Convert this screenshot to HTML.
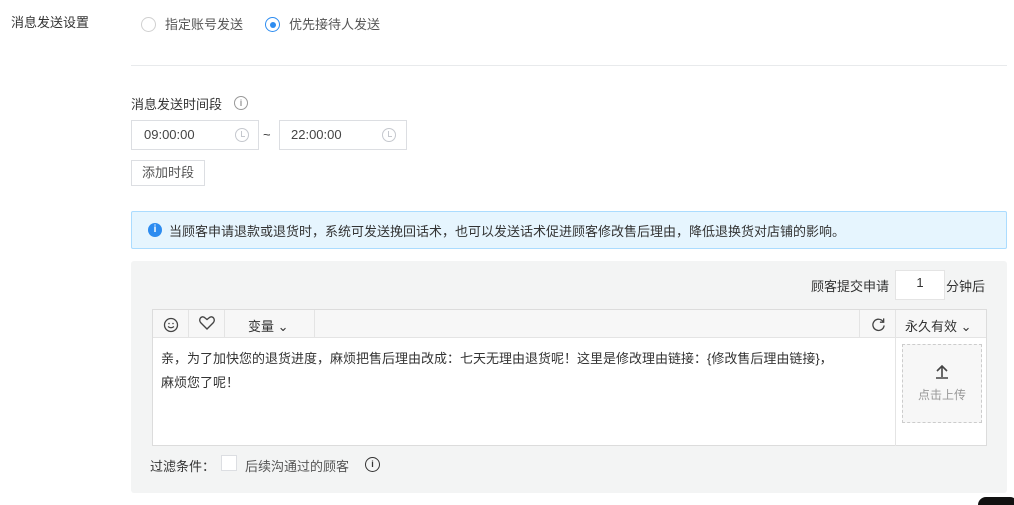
<!DOCTYPE html>
<html><head><meta charset="utf-8"><style>
*{box-sizing:border-box;margin:0;padding:0}
body{width:1014px;height:501px;background:#fff;position:relative;overflow:hidden;font-family:"Liberation Sans","Noto Sans CJK SC",sans-serif;font-size:13px;color:#333}
.a{position:absolute}
.radio{width:15px;height:15px;border:1px solid #d0d0d0;border-radius:50%;background:#fff}
.radio.on{border-color:#2d8cf0}
.radio.on:after{content:"";position:absolute;left:3.5px;top:3.5px;width:6px;height:6px;border-radius:50%;background:#2d8cf0}
.inp{border:1px solid #dcdee2;background:#fff;height:30px}
.clock{width:14px;height:14px;border:1px solid #c5c8ce;border-radius:50%}
.clock:after{content:"";position:absolute;left:5px;top:2px;width:3px;height:5px;border-left:1px solid #c5c8ce;border-bottom:1px solid #c5c8ce}
.vl{position:absolute;top:0;width:1px;height:28px;background:#e4e4e4}
</style></head><body>
<div class="a" style="left:11px;top:12px;color:#333">消息发送设置</div>
<div class="a radio" style="left:141px;top:17px"></div>
<div class="a" style="left:165px;top:14px;color:#555">指定账号发送</div>
<div class="a radio on" style="left:265px;top:17px"></div>
<div class="a" style="left:289px;top:14px;color:#555">优先接待人发送</div>
<div class="a" style="left:131px;top:65px;width:876px;height:1px;background:#e8eaec"></div>
<div class="a" style="left:131px;top:94px">消息发送时间段</div>
<div class="a" style="left:234px;top:96px;width:14px;height:14px;border:1px solid #999;border-radius:50%;font-size:9px;line-height:12px;text-align:center;color:#999;font-weight:bold">i</div>
<div class="a inp" style="left:131px;top:120px;width:128px"><span class="a" style="left:12px;top:6px;color:#444">09:00:00</span><div class="a clock" style="left:103px;top:7px"></div></div>
<div class="a" style="left:263px;top:127px">~</div>
<div class="a inp" style="left:279px;top:120px;width:128px"><span class="a" style="left:11px;top:6px;color:#444">22:00:00</span><div class="a clock" style="left:102px;top:7px"></div></div>
<div class="a" style="left:131px;top:160px;width:74px;height:26px;border:1px solid #dcdee2;line-height:24px;text-align:center;color:#555">添加时段</div>
<div class="a" style="left:131px;top:211px;width:876px;height:38px;background:#e6f5fe;border:1px solid #abdcff;border-radius:2px"></div>
<div class="a" style="left:148px;top:223px;width:14px;height:14px;border-radius:50%;background:#2d8cf0;color:#fff;font-size:10px;line-height:14px;text-align:center;font-weight:bold">i</div>
<div class="a" style="left:169px;top:221px;color:#333">当顾客申请退款或退货时，系统可发送挽回话术，也可以发送话术促进顾客修改售后理由，降低退换货对店铺的影响。</div>
<div class="a" style="left:131px;top:261px;width:876px;height:232px;background:#f3f4f4;border-radius:3px"></div>
<div class="a" style="left:811px;top:276px">顾客提交申请</div>
<div class="a" style="left:895px;top:270px;width:50px;height:30px;background:#fff;border:1px solid #e4e4e4;text-align:center;line-height:24px">1</div>
<div class="a" style="left:946px;top:276px">分钟后</div>
<div class="a" style="left:152px;top:309px;width:835px;height:137px;background:#fff;border:1px solid #dcdcdc">
 <div class="a" style="left:0;top:0;width:833px;height:28px;background:#f7f7f7;border-bottom:1px solid #e4e4e4"></div>
 <div class="vl" style="left:35px"></div><div class="vl" style="left:71px"></div><div class="vl" style="left:161px"></div><div class="vl" style="left:706px"></div><div class="vl" style="left:742px;height:136px"></div>
 <svg class="a" style="left:10px;top:7px" width="16" height="16" viewBox="0 0 16 16"><circle cx="8" cy="8" r="6.5" fill="none" stroke="#444" stroke-width="1.3"/><path d="M5 9.5 Q8 12 11 9.5" fill="none" stroke="#444" stroke-width="1.2"/><circle cx="6" cy="6.5" r="0.8" fill="#444"/><circle cx="10" cy="6.5" r="0.8" fill="#444"/></svg>
 <svg class="a" style="left:46px;top:6px" width="16" height="14" viewBox="0 0 16 14"><path d="M8 13 L2 7 C-1 4 2 -1 5.5 1.5 L8 3.5 L10.5 1.5 C14 -1 17 4 14 7 Z" fill="none" stroke="#444" stroke-width="1.4"/></svg>
 <div class="a" style="left:95px;top:6px">变量 ⌄</div>
 <svg class="a" style="left:718px;top:7px" width="15" height="15" viewBox="0 0 16 16"><path d="M13 5 A6 6 0 1 0 14 9" fill="none" stroke="#444" stroke-width="1.4"/><path d="M13.5 1.5 V5.5 H9.5" fill="none" stroke="#444" stroke-width="1.4"/></svg>
 <div class="a" style="left:752px;top:6px">永久有效 ⌄</div>
 <div class="a" style="left:8px;top:37px;width:735px;line-height:24px;color:#333;white-space:nowrap">亲，为了加快您的退货进度，麻烦把售后理由改成：七天无理由退货呢！这里是修改理由链接：{修改售后理由链接}，<br>麻烦您了呢！</div>
 <div class="a" style="left:749px;top:34px;width:80px;height:79px;border:1px dashed #ccc;background:#f7f7f7;text-align:center">
  <svg style="margin-top:18px" width="16" height="16" viewBox="0 0 16 16"><path d="M8 14 V3 M3 8 L8 3 L13 8 M2 15 H14" fill="none" stroke="#444" stroke-width="1.6"/></svg>
  <div style="color:#999;font-size:12px;margin-top:4px">点击上传</div>
 </div>
</div>
<div class="a" style="left:150px;top:456px">过滤条件：</div>
<div class="a" style="left:221px;top:455px;width:16px;height:16px;border:1px solid #dcdee2;background:#fff"></div>
<div class="a" style="left:245px;top:456px;color:#555">后续沟通过的顾客</div>
<div class="a" style="left:365px;top:457px;width:15px;height:15px;border:1.5px solid #333;border-radius:50%;font-size:9px;line-height:12px;text-align:center;font-weight:bold">i</div>
<div class="a" style="left:978px;top:497px;width:40px;height:8px;background:#111;border-radius:8px 8px 0 0"></div>
</body></html>
